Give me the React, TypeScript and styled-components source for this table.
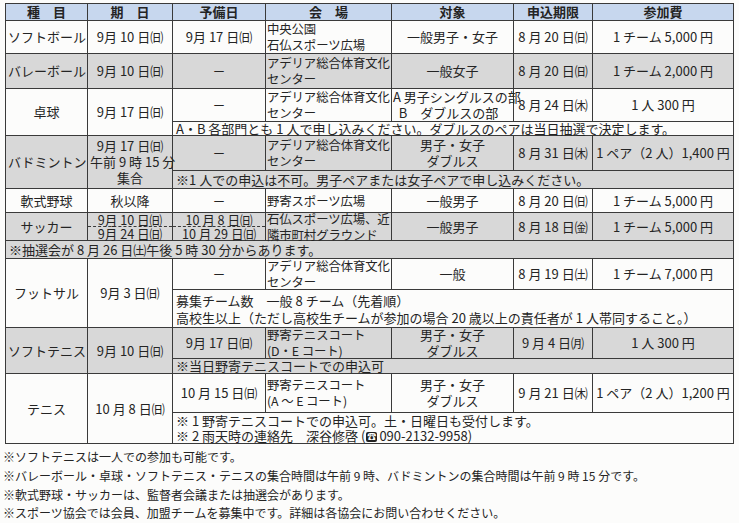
import styled, { createGlobalStyle } from "styled-components";
import { ReactNode } from "react";

const GlobalStyle = createGlobalStyle`
    html, body {
        margin: 0;
        padding: 0;
        background: #fcfcfb;
    }
    body {
        font-family: "Noto Sans CJK JP", "Noto Sans", sans-serif;
        color: #242424;
    }
`;

const Spage = styled.div`
    width: 739px;
    height: 523px;
    padding-top: 3px;
    box-sizing: border-box;
    overflow: hidden;
`;

const Stable = styled.table`
    margin-left: 5px;
    width: 728px;
    border-collapse: collapse;
    table-layout: fixed;
    border: 1.5px solid #262626;
    font-size: 13px;
    line-height: 16px;
`;

// 高さ固定の枠（行の高さをスキャン画像に合わせるため）
const Sfix = styled.div`
    display: flex;
    align-items: center;
    overflow: visible;
`;
const Stext = styled.div<{ $lh?: number }>`
    width: 100%;
    line-height: ${(p) => p.$lh ?? 16}px;
`;

const Sth = styled.th`
    padding: 0;
    background: #c7d7ee;
    border: 1px solid #3a3a3a;
    font-size: 13px;
    font-weight: 700;
    text-align: center;
    white-space: pre;
`;

const Str = styled.tr<{ $h: number; $shade?: boolean }>`
    background: ${(p) => (p.$shade ? "#d8d8d8" : "transparent")};
    & > td > ${Sfix}, & > th > ${Sfix} {
        height: ${(p) => p.$h - 1}px;
    }
`;

const Std = styled.td<{ $left?: boolean }>`
    padding: 0 ${(p) => (p.$left ? "1px" : "2px")};
    border: 1px solid #3a3a3a;
    text-align: ${(p) => (p.$left ? "left" : "center")};
    vertical-align: middle;
    white-space: nowrap;
`;

const SvenueTd = styled.td`
    padding: 0 0 0 1px;
    border: 1px solid #3a3a3a;
    text-align: left;
    white-space: nowrap;
    font-size: 12.4px;
    letter-spacing: -0.1px;
`;

const SnoteTd = styled.td`
    padding: 0 3px;
    border: 1px solid #3a3a3a;
    text-align: left;
    white-space: nowrap;
`;

const SstackTd = styled.td`
    padding: 0;
    border: 1px solid #3a3a3a;
`;

const SstackLine = styled.div<{ $dashed?: boolean }>`
    height: 13px;
    line-height: 13px;
    font-size: 12.6px;
    text-align: center;
    border-top: ${(p) => (p.$dashed ? "1px dashed #3a3a3a" : "none")};
`;

const Sphone = styled.span`
    display: inline-block;
    margin: 0 2px 0 1px;
    padding: 0 1px;
    background: #222;
    color: #fff;
    border-radius: 2px;
    font-size: 9px;
    line-height: 10px;
    vertical-align: 1px;
`;

const Snotes = styled.div`
    margin-top: 4px;
    padding-left: 3px;
    font-size: 12px;
    line-height: 18.8px;
    white-space: nowrap;
`;

const Cell = ({ children, left }: { children: ReactNode; left?: boolean }) => (
    <Std $left={left}><Sfix><Stext>{children}</Stext></Sfix></Std>
);
const Head = ({ children }: { children: ReactNode }) => (
    <Sth><Sfix><Stext>{children}</Stext></Sfix></Sth>
);
const Venue = ({ children }: { children: ReactNode }) => (
    <SvenueTd><Sfix><Stext>{children}</Stext></Sfix></SvenueTd>
);
const Note = ({ children, span = 5, lh }: { children: ReactNode; span?: number; lh?: number }) => (
    <SnoteTd colSpan={span}><Sfix><Stext $lh={lh}>{children}</Stext></Sfix></SnoteTd>
);
const Dash = () => <Cell>－</Cell>;

const App = () => {
    return (
        <Spage>
            <GlobalStyle />
            <Stable>
                <colgroup>
                    <col style={{ width: 82 }} />
                    <col style={{ width: 85 }} />
                    <col style={{ width: 93 }} />
                    <col style={{ width: 126 }} />
                    <col style={{ width: 122 }} />
                    <col style={{ width: 79 }} />
                    <col style={{ width: 141 }} />
                </colgroup>
                <thead>
                    <Str $h={17}>
                        <Head>種　目</Head>
                        <Head>期　日</Head>
                        <Head>予備日</Head>
                        <Head>会　場</Head>
                        <Head>対象</Head>
                        <Head>申込期限</Head>
                        <Head>参加費</Head>
                    </Str>
                </thead>
                <tbody>
                    <Str $h={33}>
                        <Cell>ソフトボール</Cell>
                        <Cell>9月 10 日㈰</Cell>
                        <Cell>9月 17 日㈰</Cell>
                        <Venue>中央公園<br />石仏スポーツ広場</Venue>
                        <Cell>一般男子・女子</Cell>
                        <Cell>8 月 20 日㈰</Cell>
                        <Cell>1 チーム 5,000 円</Cell>
                    </Str>
                    <Str $h={35} $shade>
                        <Cell>バレーボール</Cell>
                        <Cell>9月 10 日㈰</Cell>
                        <Dash />
                        <Venue>アデリア総合体育文化<br />センター</Venue>
                        <Cell>一般女子</Cell>
                        <Cell>8 月 20 日㈰</Cell>
                        <Cell>1 チーム 2,000 円</Cell>
                    </Str>

                    <Str $h={33}>
                        <Std rowSpan={2}>卓球</Std>
                        <Std rowSpan={2}>9月 17 日㈰</Std>
                        <Dash />
                        <Venue>アデリア総合体育文化<br />センター</Venue>
                        <Cell left>A 男子シングルスの部<br />&nbsp;&nbsp;B　ダブルスの部</Cell>
                        <Cell>8 月 24 日㈭</Cell>
                        <Cell>1 人 300 円</Cell>
                    </Str>
                    <Str $h={14}>
                        <Note>A・B 各部門とも 1 人で申し込みください。ダブルスのペアは当日抽選で決定します。</Note>
                    </Str>

                    <Str $h={35} $shade>
                        <Std rowSpan={2}>バドミントン</Std>
                        <Std rowSpan={2}>9月 17 日㈰<br />午前 9 時 15 分<br />集合</Std>
                        <Dash />
                        <Venue>アデリア総合体育文化<br />センター</Venue>
                        <Cell>男子・女子<br />ダブルス</Cell>
                        <Cell>8 月 31 日㈭</Cell>
                        <Cell>1 ペア（2 人）1,400 円</Cell>
                    </Str>
                    <Str $h={18} $shade>
                        <Note>※1 人での申込は不可。男子ペアまたは女子ペアで申し込みください。</Note>
                    </Str>

                    <Str $h={24}>
                        <Cell>軟式野球</Cell>
                        <Cell>秋以降</Cell>
                        <Dash />
                        <Venue>野寄スポーツ広場</Venue>
                        <Cell>一般男子</Cell>
                        <Cell>8 月 20 日㈰</Cell>
                        <Cell>1 チーム 5,000 円</Cell>
                    </Str>

                    <Str $h={28} $shade>
                        <Cell>サッカー</Cell>
                        <SstackTd>
                            <SstackLine>9月 10 日㈰</SstackLine>
                            <SstackLine $dashed>9月 24 日㈰</SstackLine>
                        </SstackTd>
                        <SstackTd>
                            <SstackLine>10 月 8 日㈰</SstackLine>
                            <SstackLine $dashed>10 月 29 日㈰</SstackLine>
                        </SstackTd>
                        <Venue>石仏スポーツ広場、近<br />隣市町村グラウンド</Venue>
                        <Cell>一般男子</Cell>
                        <Cell>8 月 18 日㈮</Cell>
                        <Cell>1 チーム 5,000 円</Cell>
                    </Str>
                    <Str $h={18} $shade>
                        <Note span={7}>※抽選会が 8 月 26 日㈯午後 5 時 30 分からあります。</Note>
                    </Str>

                    <Str $h={31}>
                        <Std rowSpan={2}>フットサル</Std>
                        <Std rowSpan={2}>9月 3 日㈰</Std>
                        <Dash />
                        <Venue>アデリア総合体育文化<br />センター</Venue>
                        <Cell>一般</Cell>
                        <Cell>8 月 19 日㈯</Cell>
                        <Cell>1 チーム 7,000 円</Cell>
                    </Str>
                    <Str $h={38}>
                        <Note lh={17}>
                            募集チーム数　一般 8 チーム（先着順）<br />
                            高校生以上（ただし高校生チームが参加の場合 20 歳以上の責任者が 1 人帯同すること。）
                        </Note>
                    </Str>

                    <Str $h={31} $shade>
                        <Std rowSpan={2}>ソフトテニス</Std>
                        <Std rowSpan={2}>9月 10 日㈰</Std>
                        <Cell>9月 17 日㈰</Cell>
                        <Venue>野寄テニスコート<br />(D・E コート)</Venue>
                        <Cell>男子・女子<br />ダブルス</Cell>
                        <Cell>9 月 4 日㈪</Cell>
                        <Cell>1 人 300 円</Cell>
                    </Str>
                    <Str $h={15} $shade>
                        <Note>※当日野寄テニスコートでの申込可</Note>
                    </Str>

                    <Str $h={39}>
                        <Std rowSpan={2}>テニス</Std>
                        <Std rowSpan={2}>10 月 8 日㈰</Std>
                        <Cell>10 月 15 日㈰</Cell>
                        <Venue>野寄テニスコート<br />(A ～ E コート)</Venue>
                        <Cell>男子・女子<br />ダブルス</Cell>
                        <Cell>9 月 21 日㈭</Cell>
                        <Cell>1 ペア（2 人）1,200 円</Cell>
                    </Str>
                    <Str $h={31}>
                        <Note lh={15}>
                            ※ 1 野寄テニスコートでの申込可。土・日曜日も受付します。<br />
                            ※ 2 雨天時の連絡先　深谷修啓 (<Sphone>☎</Sphone>090-2132-9958)
                        </Note>
                    </Str>
                </tbody>
            </Stable>
            <Snotes>
                ※ソフトテニスは一人での参加も可能です。<br />
                ※バレーボール・卓球・ソフトテニス・テニスの集合時間は午前 9 時、バドミントンの集合時間は午前 9 時 15 分です。<br />
                ※軟式野球・サッカーは、監督者会議または抽選会があります。<br />
                ※スポーツ協会では会員、加盟チームを募集中です。詳細は各協会にお問い合わせください。
            </Snotes>
        </Spage>
    );
};

export default App;
